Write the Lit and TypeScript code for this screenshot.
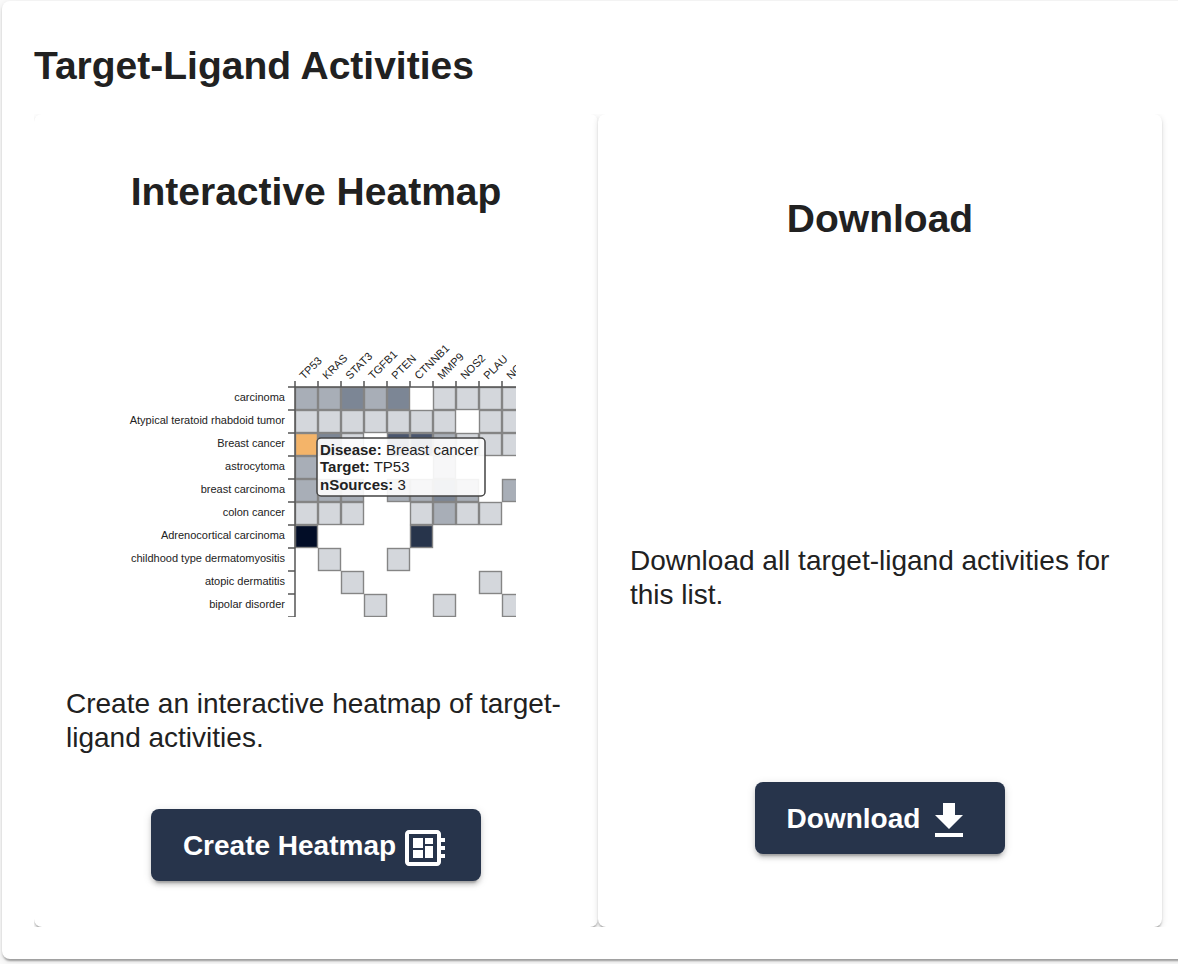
import { LitElement, html, svg, css } from "lit";
import { customElement } from "lit/decorators.js";

const TARGETS = ["TP53", "KRAS", "STAT3", "TGFB1", "PTEN", "CTNNB1", "MMP9", "NOS2", "PLAU", "NO"];

/* One digit per target: 0 is empty, 1 to 6 run from pale to darkest, 9 is the hovered cell. */
const ROWS: [string, string][] = [
  ["carcinoma", "2232301111"],
  ["Atypical teratoid rhabdoid tumor", "1111111011"],
  ["Breast cancer", "9310442111"],
  ["astrocytoma", "2000002000"],
  ["breast carcinoma", "2220223202"],
  ["colon cancer", "1110012110"],
  ["Adrenocortical carcinoma", "6000050000"],
  ["childhood type dermatomyositis", "0100100000"],
  ["atopic dermatitis", "0010000010"],
  ["bipolar disorder", "0001001001"],
];

const CELL = 23;
const LEFT = 179;
const TOP = 70;

@customElement("heatmap-preview")
export class HeatmapPreview extends LitElement {
  static styles = css`
    :host { display: block; width: 400px; max-width: 100%; }
    svg { display: block; width: 100%; font-family: "Liberation Sans", Arial, sans-serif; }
    .label { font-size: 11px; fill: #222; }
    .row { text-anchor: end; }
    .cell { stroke: #858585; stroke-width: 1.4; }
    .v1 { fill: #d4d7dc; }
    .v2 { fill: #a8aeb7; }
    .v3 { fill: #7c8695; }
    .v4 { fill: #4a566e; }
    .v5 { fill: #27344b; }
    .v6 { fill: #020d27; }
    .v9 { fill: #f4b469; }
    .axis { stroke: #555; stroke-width: 1.5; fill: none; }
    .tip { fill: #fff; fill-opacity: 0.9; stroke: #444; stroke-width: 1.5; }
    .tiptext { font-size: 15px; fill: #222; }
    .key { font-weight: 700; }
  `;

  render() {
    const right = LEFT + CELL * TARGETS.length;
    const bottom = TOP + CELL * ROWS.length;
    return html`<svg viewBox="0 0 400 300" role="img" aria-label="Heatmap preview">
      ${ROWS.map(([name, values], r) => svg`
        <text class="label row" x="169" y=${TOP + r * CELL + 14}>${name}</text>
        ${[...values].map((v, c) => v === "0" ? null : svg`
          <rect class="cell v${v}" x=${LEFT + c * CELL + 0.5} y=${TOP + r * CELL + 0.5} width=${CELL - 1} height=${CELL - 1}></rect>`)}
      `)}
      ${TARGETS.map((name, c) => svg`
        <text class="label" transform="translate(${LEFT + c * CELL + 9} ${TOP - 7}) rotate(-45)">${name}</text>
        <path class="axis" d="M${LEFT + c * CELL} ${TOP - 6}v6"></path>`)}
      ${[...ROWS, null].map((_, r) => svg`
        <path class="axis" d="M172 ${TOP + r * CELL}h7"></path>`)}
      <path class="axis" d="M${LEFT} ${bottom}V${TOP}H${right}"></path>
      <rect class="tip" x="201" y="121" width="168" height="58" rx="4"></rect>
      <text class="tiptext" x="204" y="138"><tspan class="key">Disease:</tspan> Breast cancer</text>
      <text class="tiptext" x="204" y="155"><tspan class="key">Target:</tspan> TP53</text>
      <text class="tiptext" x="204" y="173"><tspan class="key">nSources:</tspan> 3</text>
    </svg>`;
  }
}

@customElement("app-root")
export class AppRoot extends LitElement {
  static styles = css`
    :host {
      display: block;
      box-sizing: border-box;
      min-height: 100vh;
      padding: 1px 0 4px 2px;
      overflow: hidden;
      background: #fafafa;
      color: #212121;
      font: 28px/34px "Liberation Sans", Arial, sans-serif;
    }
    .panel {
      margin-right: -16px;
      padding: 41px 16px 32px 32px;
      border-radius: 8px;
      background: #fff;
      box-shadow: 0 4px 2px -2px rgba(0, 0, 0, 0.2), 0 2px 2px rgba(0, 0, 0, 0.14), 0 2px 6px rgba(0, 0, 0, 0.12);
    }
    h1, h2 { margin: 0; font-size: 39px; line-height: 48px; font-weight: 700; }
    h2 { text-align: center; }
    p { margin: 0; }
    .cards {
      display: grid;
      grid-template-columns: 1fr 1fr;
      margin-top: 24px;
      padding-right: 16px;
      overflow: hidden;
    }
    .card {
      box-sizing: border-box;
      display: flex;
      flex-direction: column;
      align-items: center;
      padding: 54px 32px 46px;
      border-radius: 8px;
      background: #fff;
      box-shadow: 0 4px 2px -2px rgba(0, 0, 0, 0.2), 0 2px 2px rgba(0, 0, 0, 0.14), 0 2px 6px rgba(0, 0, 0, 0.12);
    }
    .card p { align-self: stretch; }
    .preview { margin: 101px 0 70px; }
    .heatmap p { margin-bottom: 54px; }
    .download { justify-content: space-between; padding: 81px 32px 73px; }
    .download p { padding-top: 131px; }
    button {
      box-sizing: border-box;
      display: flex;
      align-items: center;
      height: 72px;
      padding: 2px 32px 0;
      border: 0;
      border-radius: 8px;
      background: #27344b;
      color: #fff;
      font: 700 28px/34px "Liberation Sans", Arial, sans-serif;
      box-shadow: 0 6px 2px -4px rgba(0, 0, 0, 0.2), 0 4px 4px rgba(0, 0, 0, 0.14), 0 2px 10px rgba(0, 0, 0, 0.12);
    }
    button svg { width: 48px; height: 48px; margin: 4px 0 0 5px; fill: currentColor; }
  `;

  render() {
    return html`
      <main class="panel">
        <h1>Target-Ligand Activities</h1>
        <div class="cards">
          <section class="card heatmap">
            <h2>Interactive Heatmap</h2>
            <heatmap-preview class="preview"></heatmap-preview>
            <p>Create an interactive heatmap of target-ligand activities.</p>
            <button type="button">Create Heatmap
              <svg viewBox="0 0 24 24" aria-hidden="true"><path d="M22 9V7h-2V5c0-1.100-.9-2-2-2H4c-1.100 0-2 .9-2 2v14c0 1.100.9 2 2 2h14c1.100 0 2-.9 2-2v-2h2v-2h-2v-2h2v-2h-2V9h2zm-4 10H4V5h14v14zM6 13h5v4H6zm6-6h4v3h-4zM6 7h5v5H6zm6 4h4v6h-4z"></path></svg>
            </button>
          </section>
          <section class="card download">
            <h2>Download</h2>
            <p>Download all target-ligand activities for this list.</p>
            <button type="button">Download
              <svg viewBox="0 0 24 24" aria-hidden="true"><path d="M19 9h-4V3H9v6H5l7 7 7-7zM5 18v2h14v-2H5z"></path></svg>
            </button>
          </section>
        </div>
      </main>
    `;
  }
}
